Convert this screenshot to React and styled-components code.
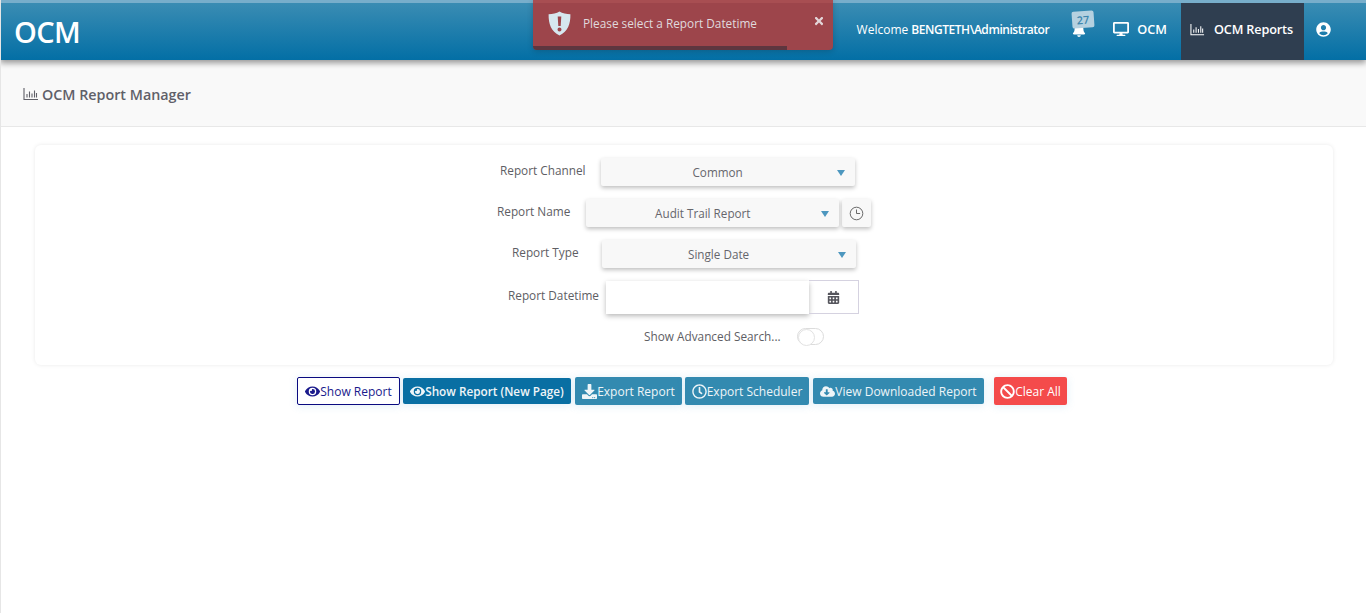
import React from 'react';
import styled, { createGlobalStyle } from 'styled-components';
import {
  FaEye, FaDownload, FaCloudDownloadAlt, FaBan, FaCalendarAlt, FaDesktop, FaUserCircle, FaBell, FaTimes,
} from 'react-icons/fa';
import { FaRegClock } from 'react-icons/fa';

const GlobalStyle = createGlobalStyle`
  html, body { margin: 0; padding: 0; height: 100%; background: #fff; }
  body { font-family: "Open Sans", "Liberation Sans", sans-serif; color: #5f5f66; }
  * { box-sizing: border-box; }
`;

const Page = styled.div`
  position: relative;
  height: 613px;
  overflow: hidden;
  border-left: 1px solid #e6e6e6;
`;

const Header = styled.header`
  position: relative;
  z-index: 2;
  height: 60px;
  margin-left: -1px;
  display: flex;
  align-items: stretch;
  justify-content: space-between;
  border-top: 3px solid #78aecb;
  background: linear-gradient(to bottom, #3a8cb3, #036fa5);
  box-shadow: 0 3px 6px rgba(0, 0, 0, 0.4);
  color: #fff;
`;

const Logo = styled.div`
  padding: 11px 0 0 14px;
  font-size: 29px;
  line-height: 36px;
  font-weight: 600;
  letter-spacing: -0.6px;
`;

const HeaderRight = styled.nav`
  display: flex;
  align-items: stretch;
  padding-right: 35px;
  font-size: 12.7px;
  font-weight: 600;
`;

const Welcome = styled.div`
  display: flex;
  align-items: center;
  padding: 0 23px 5px 0;
  font-size: 12px;
  font-weight: 400;
  b { font-weight: 600; margin-left: 3px; letter-spacing: -0.45px; }
`;

const BellWrap = styled.div`
  position: relative;
  width: 26px;
  margin-right: 15px;
  display: flex;
  align-items: center;
  font-size: 14px;
  padding-bottom: 5px;
  svg { margin: 2px 0 0 0; }
`;

const BellBadge = styled.span`
  position: absolute;
  top: 8px;
  left: 0;
  width: 22px;
  height: 17px;
  border-radius: 2px;
  background: #b5d1e0;
  color: #3d86ad;
  font-size: 11px;
  line-height: 17px;
  font-weight: 600;
  text-align: center;
  transform: rotate(-4deg);
`;

const NavItem = styled.div`
  display: flex;
  align-items: center;
  gap: ${(p) => (p.$active ? 9 : 8)}px;
  height: 57px;
  padding: 0 ${(p) => (p.$active ? '11px' : '0')} 5px ${(p) => (p.$active ? '9px' : '0')};
  margin-right: ${(p) => (p.$active ? 12 : 14)}px;
  background: ${(p) => (p.$active ? '#2f3e50' : 'transparent')};
  letter-spacing: ${(p) => (p.$active ? '-0.15px' : '0')};
  white-space: nowrap;
`;

const ProfileIcon = styled.div`
  display: flex;
  align-items: center;
  padding-bottom: 5px;
  font-size: 15px;
`;

const Toast = styled.div`
  position: absolute;
  z-index: 3;
  top: 0;
  left: 532px;
  width: 300px;
  height: 50px;
  display: flex;
  align-items: center;
  padding: 0 0 7px 15px;
  border-radius: 0 0 4px 4px;
  background: #9d454b;
  border-top: 3px solid #a84e52;
  color: #e0dadd;
  font-size: 11.8px;
  box-shadow: 0 1px 6px rgba(0, 0, 0, 0.2);
  overflow: hidden;
`;

const ToastText = styled.span`
  margin-left: 12px;
`;

const ToastClose = styled.span`
  position: absolute;
  top: 11px;
  right: 8px;
  font-size: 12px;
  color: #e3d6d9;
`;

const ToastProgress = styled.div`
  position: absolute;
  left: 0;
  bottom: 0;
  height: 4px;
  background: #5e363f;
`;

const TitleBar = styled.div`
  height: 67px;
  display: flex;
  align-items: center;
  gap: 3px;
  padding: 2px 0 0 22px;
  background: #f9f9f9;
  border-bottom: 1px solid #e8e8e8;
  color: #606068;
  font-size: 14.3px;
  font-weight: 600;
`;

const FormCard = styled.section`
  margin: 18px 33px 0 34px;
  height: 220px;
  padding-top: 13px;
  border-radius: 6px;
  box-shadow: 0 0 4px rgba(0, 0, 0, 0.09);
`;

const Row = styled.div`
  display: flex;
  align-items: center;
  height: ${(p) => p.$height}px;
  margin-bottom: ${(p) => p.$gap}px;
  padding-left: ${(p) => p.$indent}px;
`;

const Label = styled.label`
  margin-right: ${(p) => p.$space}px;
  margin-top: ${(p) => p.$lift || 0}px;
  font-size: 11.8px;
  font-weight: 500;
  color: #5e5e64;
  white-space: nowrap;
`;

const SelectBox = styled.div`
  position: relative;
  width: ${(p) => p.$width}px;
  height: 28px;
  display: flex;
  align-items: center;
  justify-content: center;
  padding-right: 20px;
  background: #f8f8f8;
  border-radius: 2px;
  box-shadow: 0 2px 4px rgba(0, 0, 0, 0.25);
  color: #66666c;
  font-size: 11.7px;
  &::after {
    content: '';
    position: absolute;
    right: 10px;
    top: 12px;
    border-left: 4px solid transparent;
    border-right: 4px solid transparent;
    border-top: 6px solid #4d97bf;
  }
`;

const ClockButton = styled.div`
  width: 29px;
  height: 28px;
  margin-left: 3px;
  display: flex;
  align-items: center;
  justify-content: center;
  background: #f8f8f8;
  border-radius: 2px;
  box-shadow: 0 2px 4px rgba(0, 0, 0, 0.25);
  color: #666;
`;

const DateInput = styled.input`
  width: 203px;
  height: 33px;
  border: 0;
  outline: 0;
  background: #fff;
  box-shadow: 0 2px 5px rgba(0, 0, 0, 0.28);
`;

const CalendarAddon = styled.div`
  width: 50px;
  height: 34px;
  display: flex;
  align-items: center;
  justify-content: center;
  border: 1px solid #d5d2e0;
  border-left: 0;
  color: #55555c;
  font-size: 13px;
`;

const Switch = styled.div`
  width: 27px;
  height: 17px;
  margin-left: 16px;
  margin-top: 1px;
  border-radius: 9px;
  border: 1px solid #dcdcdc;
  background: #fff;
  &::before {
    content: '';
    display: block;
    width: 15px;
    height: 15px;
    border-radius: 50%;
    border: 1px solid #e2e2e2;
    background: #fff;
  }
`;

const ButtonBar = styled.div`
  display: flex;
  align-items: center;
  margin: 12px 0 0 296px;
`;

const variants = {
  outline: 'background:#fff;color:#1a1a8c;border:1px solid #0a0a80;font-weight:400;',
  primary: 'background:#096fa3;color:#f0f5f8;font-weight:600;font-size:11.75px;',
  info: 'background:#338ab0;color:#eef5f8;',
  danger: 'background:#f44b4b;color:#fff;',
};

const ActionButton = styled.button`
  width: ${(p) => p.$width}px;
  height: ${(p) => (p.$tall ? 28 : 26)}px;
  margin-right: ${(p) => p.$space ?? 3}px;
  padding: 0;
  display: inline-flex;
  align-items: center;
  justify-content: center;
  border: 0;
  border-radius: 2px;
  font-family: inherit;
  font-size: 12px;
  font-weight: 500;
  white-space: nowrap;
  box-shadow: 0 1px 8px rgba(80, 160, 210, 0.18);
  ${(p) => variants[p.$kind]}
  svg { font-size: 15px; flex-shrink: 0; }
`;

// thin bar chart used in the title and the nav
const ChartIcon = ({ size = 16 }) => (
  <svg width={size} height={size} viewBox="0 0 16 16" fill="none" stroke="currentColor" strokeWidth="1.1">
    <path d="M1 2v11.5h14" />
    <path d="M4 11.5V8M6.5 11.5V5.5M9 11.5V7.5M11.5 11.5V4.5M13.5 11.5V7" />
  </svg>
);

const ShieldIcon = () => (
  <svg width="23" height="25" viewBox="0 0 23 25">
    <path d="M11.5 0.5C8.5 2.5 4.5 3 0.6 3.2 0.4 13 3 20 11.5 24.5 20 20 22.6 13 22.4 3.2 18.5 3 14.5 2.5 11.5 0.5Z" fill="#d6e7ef" />
    <path d="M9.7 5.5h3.6l-0.6 9.5h-2.4ZM11.5 16.5a2 2 0 1 1 0 4 2 2 0 0 1 0-4Z" fill="#9d454b" />
  </svg>
);

const LineClock = () => (
  <svg width="15" height="15" viewBox="0 0 15 15" fill="none" stroke="#6a6a6a" strokeWidth="1">
    <circle cx="7.5" cy="7.5" r="6.3" />
    <path d="M7.5 3.5v4h3.6" />
  </svg>
);

export default function App() {
  return (
    <Page>
      <GlobalStyle />
      <Header>
        <Logo>OCM</Logo>
        <HeaderRight>
          <Welcome>Welcome <b>BENGTETH\Administrator</b></Welcome>
          <BellWrap>
            <FaBell />
            <BellBadge>27</BellBadge>
          </BellWrap>
          <NavItem><FaDesktop size={16} /> OCM</NavItem>
          <NavItem $active><ChartIcon size={15} /> OCM Reports</NavItem>
          <ProfileIcon><FaUserCircle /></ProfileIcon>
        </HeaderRight>
      </Header>

      <Toast>
        <ShieldIcon />
        <ToastText>Please select a Report Datetime</ToastText>
        <ToastClose><FaTimes /></ToastClose>
        <ToastProgress style={{ width: `${(254 / 300) * 100}%` }} />
      </Toast>

      <TitleBar><ChartIcon /> OCM Report Manager</TitleBar>

      <FormCard>
        <Row $indent={465} $height={28} $gap={13}>
          <Label $space={15} $lift={-5}>Report Channel</Label>
          <SelectBox $width={254}>Common</SelectBox>
        </Row>
        <Row $indent={462} $height={28} $gap={13}>
          <Label $space={16} $lift={-5}>Report Name</Label>
          <SelectBox $width={253}>Audit Trail Report</SelectBox>
          <ClockButton><LineClock /></ClockButton>
        </Row>
        <Row $indent={477} $height={28} $gap={12}>
          <Label $space={23} $lift={-5}>Report Type</Label>
          <SelectBox $width={254}>Single Date</SelectBox>
        </Row>
        <Row $indent={473} $height={34} $gap={9}>
          <Label $space={7} $lift={-4}>Report Datetime</Label>
          <DateInput />
          <CalendarAddon><FaCalendarAlt /></CalendarAddon>
        </Row>
        <Row $indent={609} $height={26} $gap={0}>
          <Label $space={0}>Show Advanced Search...</Label>
          <Switch />
        </Row>
      </FormCard>

      <ButtonBar>
        <ActionButton $kind="outline" $tall $width={103}><FaEye />Show Report</ActionButton>
        <ActionButton $kind="primary" $space={4} $width={168}><FaEye />Show Report (New Page)</ActionButton>
        <ActionButton $kind="info" $tall $width={107}><FaDownload />Export Report</ActionButton>
        <ActionButton $kind="info" $tall $space={4} $width={124}><FaRegClock />Export Scheduler</ActionButton>
        <ActionButton $kind="info" $space={10} $width={171}><FaCloudDownloadAlt />View Downloaded Report</ActionButton>
        <ActionButton $kind="danger" $tall $width={73}><FaBan />Clear All</ActionButton>
      </ButtonBar>
    </Page>
  );
}
